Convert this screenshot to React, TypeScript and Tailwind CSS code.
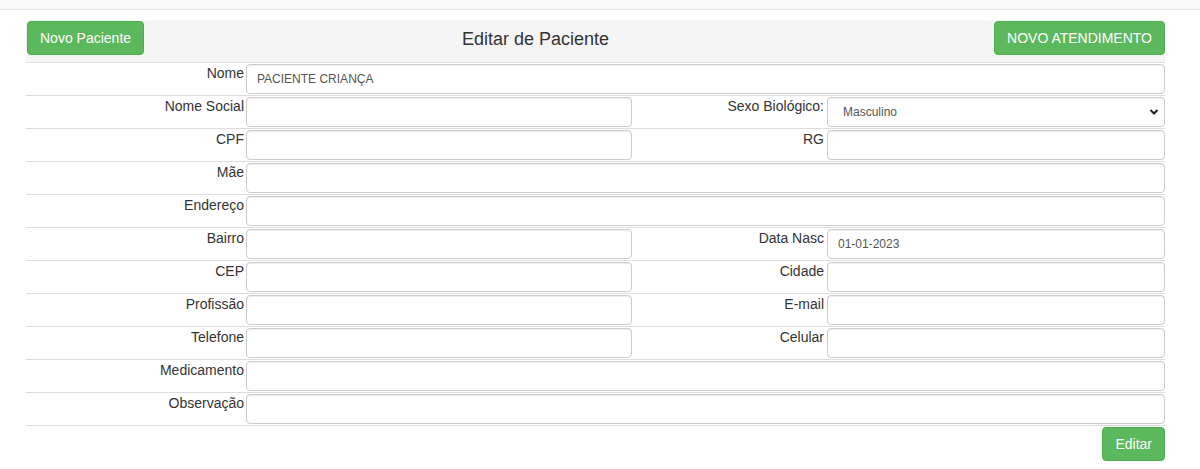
import React from "react";

const inputCls =
  "block h-[30px] w-full rounded-[4px] border border-[#ccc] bg-white px-[10px] text-[12px] text-[#555] shadow-[inset_0_1px_1px_rgba(0,0,0,0.075)] outline-none font-['Liberation_Sans',Arial,sans-serif]";

const btnCls =
  "whitespace-nowrap rounded-[4px] border border-[#4cae4c] bg-[#5cb85c] px-[12px] py-[6px] text-[14px] leading-[20px] text-white";

function Label({ children }: { children: React.ReactNode }) {
  return <div className="whitespace-nowrap pr-[1px] text-right leading-[20px]">{children}</div>;
}

function Input({ value = "" }: { value?: string }) {
  return (
    <div className="ml-[1px] pt-[1px]">
      <input className={inputCls} defaultValue={value} />
    </div>
  );
}

function FullRow({ label, value }: { label: string; value?: string }) {
  return (
    <div className="grid h-[33px] grid-cols-[219px_388px_193px_339px] border-b border-[#ddd]">
      <Label>{label}</Label>
      <div className="col-span-3">
        <Input value={value} />
      </div>
    </div>
  );
}

function SplitRow({
  l1,
  l2,
  v2,
  select,
}: {
  l1: string;
  l2: string;
  v2?: string;
  select?: boolean;
}) {
  return (
    <div className="grid h-[33px] grid-cols-[219px_388px_193px_339px] border-b border-[#ddd]">
      <Label>{l1}</Label>
      <div className="pr-[1px]">
        <Input />
      </div>
      <div className="pr-[1px]">
        <Label>{l2}</Label>
      </div>
      {select ? (
        <div className="relative ml-[1px] pt-[1px]">
          <select
            className={inputCls + " appearance-none pl-[15px]"}
            defaultValue="Masculino"
          >
            <option>Masculino</option>
            <option>Feminino</option>
          </select>
          <svg
            className="pointer-events-none absolute right-[6px] top-[12px]"
            width="10"
            height="8"
            viewBox="0 0 10 8"
          >
            <path
              d="M1.5 2l3.5 3.5L8.5 2"
              fill="none"
              stroke="#222"
              strokeWidth="2"
            />
          </svg>
        </div>
      ) : (
        <Input value={v2} />
      )}
    </div>
  );
}

export default function App() {
  return (
    <div className="min-h-screen bg-white font-['Liberation_Sans',Arial,sans-serif] text-[14px] text-[#333]">
      <div className="h-[10px] border-b border-[#e7e7e7] bg-[#f8f8f8]" />
      <div className="pl-[26px] pr-[35px] pt-[10px]">
        <div className="grid h-[43px] grid-cols-[219px_388px_193px_339px] items-start border-b border-[#ddd] bg-[#f5f5f5]">
          <div className="pl-[1px] pt-[1px]">
            <button className={btnCls}>Novo Paciente</button>
          </div>
          <div className="col-span-2 pt-[9px] text-center text-[18px] leading-[20px]">
            Editar de Paciente
          </div>
          <div className="flex items-start justify-end pt-[1px]">
            <button className={btnCls}>NOVO ATENDIMENTO</button>
          </div>
        </div>
        <FullRow label="Nome" value="PACIENTE CRIANÇA" />
        <SplitRow l1="Nome Social" l2="Sexo Biológico:" select />
        <SplitRow l1="CPF" l2="RG" />
        <FullRow label="Mãe" />
        <FullRow label="Endereço" />
        <SplitRow l1="Bairro" l2="Data Nasc" v2="01-01-2023" />
        <SplitRow l1="CEP" l2="Cidade" />
        <SplitRow l1="Profissão" l2="E-mail" />
        <SplitRow l1="Telefone" l2="Celular" />
        <FullRow label="Medicamento" />
        <FullRow label="Observação" />
        <div className="mt-[1px] flex justify-end">
          <button className={btnCls}>Editar</button>
        </div>
      </div>
    </div>
  );
}
